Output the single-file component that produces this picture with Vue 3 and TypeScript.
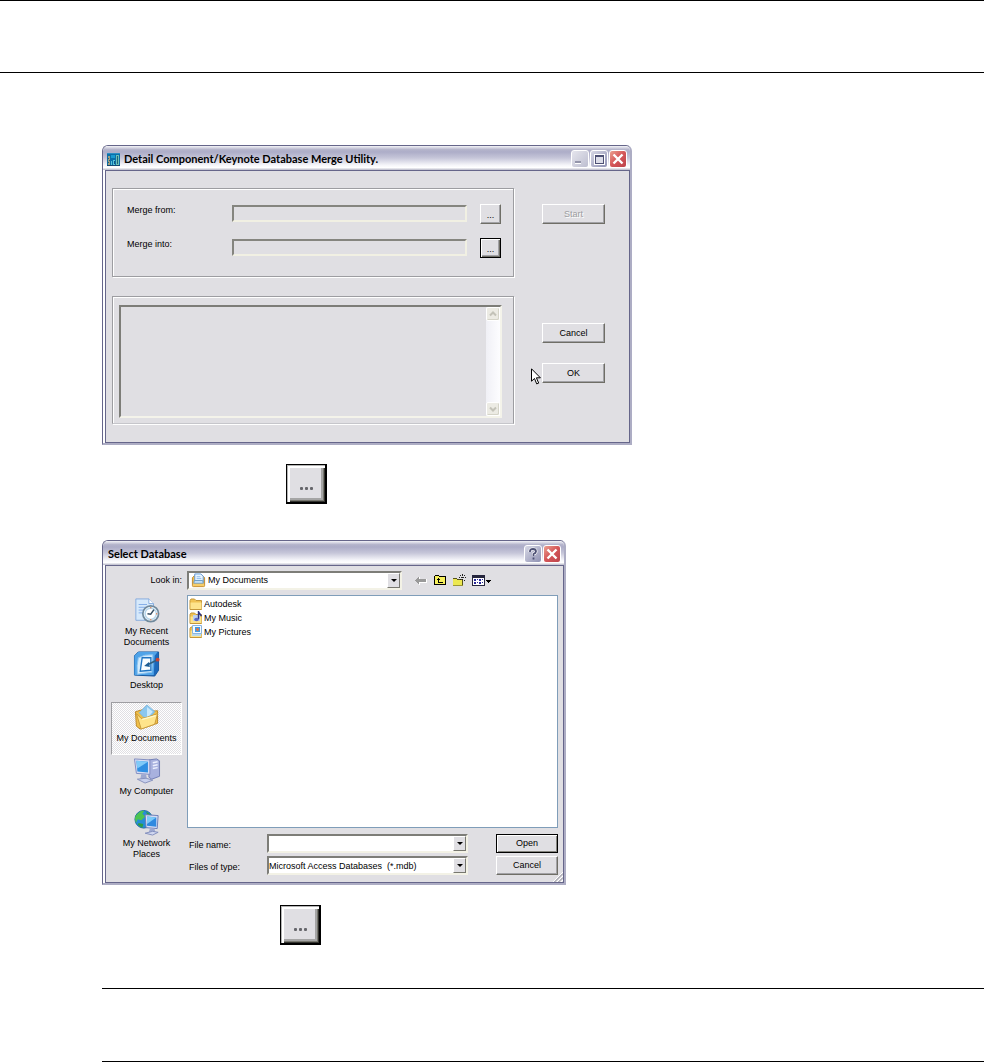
<script setup lang="ts">
import { ref } from 'vue'

const mergeFrom = ref('')
const mergeInto = ref('')
const log = ref('')
const folder = ref('My Documents')
const fileName = ref('')
const fileType = ref('mdb')

type PlaceId = 'recent' | 'desktop' | 'documents' | 'computer' | 'network'
const places: { id: PlaceId; lines: string[] }[] = [
  { id: 'recent', lines: ['My Recent', 'Documents'] },
  { id: 'desktop', lines: ['Desktop'] },
  { id: 'documents', lines: ['My Documents'] },
  { id: 'computer', lines: ['My Computer'] },
  { id: 'network', lines: ['My Network', 'Places'] },
]
const activePlace = ref<PlaceId>('documents')

const entries = [
  { name: 'Autodesk', kind: 'plain' },
  { name: 'My Music', kind: 'music' },
  { name: 'My Pictures', kind: 'pictures' },
]
</script>

<template>
  <div class="page">
    <header class="page-head"></header>

    <main class="content">
      <section class="window merge" aria-label="Merge utility">
        <div class="titlebar">
          <svg class="app-icon" viewBox="0 0 13 13" shape-rendering="crispEdges" aria-hidden="true">
            <rect width="13" height="13" fill="#0b6fa8" />
            <path d="M0 0h13v1H0z" fill="#2b8fc4" />
            <path d="M4 2h4v3H4z" fill="#1b9ad0" />
            <path d="M1 3h2v9H1z" fill="#a39c7c" />
            <path d="M9 2h3v10H9z" fill="#6fc0b4" />
            <path d="M1 5h1v1H1zM2 7h1v1H2zM1 9h1v1H1zM10 3h1v8h-1z" fill="#21647c" />
            <path d="M4 8h1v4H4zM6 7h2v5H6z" fill="#58c4d8" />
            <path d="M7 8h1v3H7z" fill="#12557e" />
            <path d="M0 12h13v1H0z" fill="#134870" />
          </svg>
          <h2>Detail Component/Keynote Database Merge Utility.</h2>
          <div class="caption-buttons">
            <button type="button" class="cap dim" aria-label="Minimize">
              <svg viewBox="0 0 16 16" shape-rendering="crispEdges"><path d="M3 10h6v3H3z" fill="#fff" /><path d="M3 10h6v2H3z" fill="#9495aa" /></svg>
            </button>
            <button type="button" class="cap" aria-label="Maximize">
              <svg viewBox="0 0 16 16" shape-rendering="crispEdges"><path d="M3 3h11v11H3z" fill="#fff" /><path d="M4 4h9v9H4z" fill="#4d5074" /><path d="M5 6h7v6H5z" fill="#dcdde8" /></svg>
            </button>
            <button type="button" class="cap close" aria-label="Close">
              <svg viewBox="0 0 16 16"><path d="M3.500 3.500l9 9M12.500 3.500l-9 9" stroke="#fff" stroke-width="2.400" /></svg>
            </button>
          </div>
        </div>

        <form class="body merge-body" @submit.prevent>
          <fieldset class="group paths">
            <label for="merge-from">Merge from:</label>
            <input id="merge-from" v-model="mergeFrom" type="text" readonly />
            <button type="button" class="btn browse" aria-label="Browse merge from">...</button>
            <label for="merge-into">Merge into:</label>
            <input id="merge-into" v-model="mergeInto" type="text" readonly />
            <button type="button" class="btn browse focused" aria-label="Browse merge into">...</button>
          </fieldset>
          <div class="actions start-actions">
            <button type="button" class="btn" disabled>Start</button>
          </div>

          <fieldset class="group log-group">
            <div class="log">
              <textarea v-model="log" readonly aria-label="Merge log"></textarea>
              <div class="scrollbar">
                <button type="button" aria-label="Scroll up"><svg viewBox="0 0 12 12"><path d="M3 7.500l3-3 3 3" /></svg></button>
                <button type="button" aria-label="Scroll down"><svg viewBox="0 0 12 12"><path d="M3 4.500l3 3 3-3" /></svg></button>
              </div>
            </div>
          </fieldset>
          <div class="actions end-actions">
            <button type="button" class="btn">Cancel</button>
            <button type="submit" class="btn">OK</button>
          </div>
        </form>
        <svg class="pointer" viewBox="0 0 10 17" aria-hidden="true">
          <path d="M.5 .8v12.400l3-2.700 2.200 5.400 2-.8-2.300-5.300h4z" fill="#fff" stroke="#000" />
        </svg>
      </section>

      <p class="step step-one">
        <button type="button" class="browse-large" aria-label="Browse"><i></i><i></i><i></i></button>
      </p>

      <section class="window select-db" aria-label="Select database">
        <div class="titlebar">
          <h2>Select Database</h2>
          <div class="caption-buttons">
            <button type="button" class="cap" aria-label="Help">
              <svg viewBox="0 0 16 16"><path d="M5 6V5q0-2 3-2t3 2.500Q11 7 8.500 8v2" fill="none" stroke="#fff" stroke-width="3" /><path d="M5 6V5q0-2 3-2t3 2.500Q11 7 8.500 8v2M8.500 11.500v2" fill="none" stroke="#4d5074" stroke-width="1.800" /></svg>
            </button>
            <button type="button" class="cap close" aria-label="Close">
              <svg viewBox="0 0 16 16"><path d="M3.500 3.500l9 9M12.500 3.500l-9 9" stroke="#fff" stroke-width="2.400" /></svg>
            </button>
          </div>
        </div>

        <form class="body select-body" @submit.prevent>
          <label class="look-label" for="look-in">Look in:</label>
          <div class="look-row">
            <div class="combo look-combo">
              <svg class="combo-icon" viewBox="0 0 16 16" aria-hidden="true">
                <path d="M1.500 5l2-2h9l2 2v8.500q0 1-1 1h-11q-1 0-1-1z" fill="#f1bd4f" stroke="#c08a2c" />
                <path d="M4 1h6.500L13 3.500V10H4z" fill="#e9f5ff" stroke="#5d96d5" />
                <path d="M6 4h4M6 6h5" stroke="#8ab9e8" />
                <path d="M3.500 8h9l.5 3H3z" fill="#c4e0f6" stroke="#699bc4" />
                <path d="M2 11.500h12V14H2z" fill="#f6cd68" />
              </svg>
              <select id="look-in" v-model="folder"><option>My Documents</option></select>
              <span class="arrow" aria-hidden="true"></span>
            </div>
            <div class="tools">
              <button type="button" aria-label="Back">
                <svg viewBox="0 0 14 14" shape-rendering="crispEdges"><path d="M5 4h1v2h7v4H6v2H5v-1H4v-1H3V9H2V8h1V7h1V6h1z" fill="#fff" /><path d="M4 4h1v2h7v3H5v2H4v-1H3V9H2V8H1V7h1V6h1V5h1z" fill="#999" /></svg>
              </button>
              <button type="button" aria-label="Up one level">
                <svg viewBox="0 0 14 14" shape-rendering="crispEdges"><path d="M1 3h1V2h4v1h7v9H1z" fill="#000" /><path d="M2 3h4v1h6v7H2z" fill="#f6f05c" /><path d="M5 5h1v1h1v1H6v2h4v1H5V7H4V6h1z" fill="#000" /></svg>
              </button>
              <button type="button" aria-label="New folder">
                <svg viewBox="0 0 14 14" shape-rendering="crispEdges"><path d="M1 5h4v1h6v7H1z" fill="#ece852" /><path d="M1 5h4v1H1zM5 6h5v1H5zM10 7h1v6h-1z" fill="#55521b" /><path d="M1 12h10v1H1z" fill="#9a9636" /><path d="M10 1h1v2h-1zM8 2h1v1H8zM12 2h1v1h-1zM9 4h3v1H9zM7 4h1v1H7zM13 4h1v1h-1zM8 6h1v1H8zM10 6h1v1h-1zM12 7h1v1h-1z" fill="#222" /></svg>
              </button>
              <button type="button" class="views" aria-label="Views">
                <svg viewBox="0 0 20 14" shape-rendering="crispEdges"><path d="M1 2h13v11H1z" fill="#26263e" /><path d="M2 5h11v7H2z" fill="#fff" /><path d="M3 6h2v2H3zM6 6h1v1H6zM8 6h2v2H8zM11 6h1v1h-1zM3 9h2v2H3zM6 9h1v1H6zM8 9h2v2H8zM11 9h1v1h-1z" fill="#28289a" /><path d="M15 7h5v1h-1v1h-1v1h-1V9h-1V8h-1z" fill="#000" /></svg>
              </button>
            </div>
          </div>

          <nav class="places" aria-label="Places">
            <button
              v-for="p in places"
              :key="p.id"
              type="button"
              class="place"
              :class="{ active: p.id === activePlace }"
              @click="activePlace = p.id"
            >
              <svg v-if="p.id === 'recent'" viewBox="0 0 28 28" aria-hidden="true">
                <path d="M2 1h14l5 5v18H2z" fill="#d6e9fb" stroke="#83aadd" />
                <path d="M16 1v5h5" fill="#fff" stroke="#83aadd" />
                <path d="M5 7h9M5 10h8M5 13h6M5 16h5" stroke="#7faae6" />
                <circle cx="18" cy="17" r="8.500" fill="#eaf3fa" stroke="#70899c" stroke-width="1.800" />
                <circle cx="18" cy="17" r="6" fill="#fff" stroke="#b7d6eb" stroke-width="1.500" />
                <path d="M21.500 12.500L18 17.500l-3.500-.5" fill="none" stroke="#344b60" stroke-width="1.600" />
                <path d="M24 17h1M18 23v1M18 10v1" stroke="#df7238" stroke-width="1.500" />
              </svg>
              <svg v-else-if="p.id === 'desktop'" viewBox="0 0 28 28" aria-hidden="true">
                <path d="M1 5l4-4h21v19l-4 6-21-1z" fill="#1c68ba" stroke="#12569e" />
                <path d="M1 5l4-4h20l-3 4-1 20H1z" fill="#4fa3e8" />
                <path d="M5 7q7-4 15-3l-1 18-15 2q-1-9 1-17z" fill="#d3ebfc" stroke="#8cc4ef" />
                <path d="M9 7h9v13l-11 1z" fill="#f8fdff" stroke="#1f74c2" stroke-width="1.400" />
                <path d="M25 9l-10 5" stroke="#2f5f80" stroke-width="1.800" />
                <path d="M11 15.500l5-4 1 5z" fill="#1a5c94" />
                <circle cx="25" cy="9" r="2" fill="#c74332" />
              </svg>
              <svg v-else-if="p.id === 'documents'" viewBox="0 0 28 28" aria-hidden="true">
                <path d="M2 8l7-2 3 2 13-1v13L7 26l-4-3z" fill="#f0bf48" stroke="#bd8827" />
                <path d="M14 1l8 7-8 9-8-8z" fill="#8bc7ef" stroke="#7fb8de" />
                <path d="M14 3l6 5-6 7z" fill="#c9e8fb" />
                <path d="M3 10l5 5 5-1 12-4-3 11-14 5z" fill="#ffe48b" stroke="#c99a38" />
                <path d="M9 16l14-4" stroke="#fff8cb" stroke-width="1.500" />
              </svg>
              <svg v-else-if="p.id === 'computer'" viewBox="0 0 28 28" aria-hidden="true">
                <path d="M16 3l8-1 3 2v16l-8 3-3-2z" fill="#a8b1de" stroke="#717eb6" />
                <path d="M20 6l5-1M20 9l5-1M20 12l5-1" stroke="#edf0ff" stroke-width="1.500" />
                <path d="M1 2l16 1v15L3 17z" fill="#d6dcf3" stroke="#7f8bc1" />
                <path d="M3 4l12 1v11L4 15z" fill="#2f8fe2" />
                <path d="M3 4l12 1L4 12z" fill="#7fcaf8" />
                <path d="M8 18h5l1 5H7z" fill="#9da8d0" />
                <path d="M4 23l9-1 7 2-8 3z" fill="#c8d0ed" stroke="#8792bc" />
              </svg>
              <svg v-else viewBox="0 0 28 28" aria-hidden="true">
                <circle cx="10.500" cy="10" r="9.500" fill="#268dd6" stroke="#1a6a9e" />
                <path d="M2 6q5-6 9-5l-2 3 3 3-4 4-4-1-2 4-1-5z" fill="#4dc451" />
                <path d="M13 2q6 2 6 8l-4-3zM5 14l5 1-1 4q-3-1-5-3z" fill="#2f9e43" />
                <path d="M12 5l14 1-1 14-12-1z" fill="#d5dcf3" stroke="#6979b3" />
                <path d="M14 7l10 1v10l-10-1z" fill="#2f89e0" />
                <path d="M14 7l10 1-10 7z" fill="#7ccaf8" />
                <path d="M17 20h5l1 4h-7z" fill="#9da8d0" />
                <path d="M12 25l8-2 6 1-6 3z" fill="#cfd6ef" stroke="#7f8bbb" />
              </svg>
              <span v-for="line in p.lines" :key="line">{{ line }}</span>
            </button>
          </nav>

          <ul class="files">
            <li v-for="e in entries" :key="e.name">
              <svg viewBox="0 0 14 14" aria-hidden="true">
                <path d="M1 3.500l1-1.500h3.500L7 3.500h5.500v9H1z" fill="#f0c253" stroke="#c4973a" />
                <path d="M1.500 5.500h11V12h-11z" fill="#fde38c" />
                <template v-if="e.kind === 'music'">
                  <path d="M4 4h7v6H4z" fill="#bed0ee" />
                  <path d="M9.500 0v8M9.500 1l3 4" fill="none" stroke="#2c3283" stroke-width="1.400" />
                  <ellipse cx="7.500" cy="8.500" rx="2.300" ry="1.800" fill="#5a68c4" />
                </template>
                <template v-if="e.kind === 'pictures'">
                  <path d="M3.500 .5h9v8h-9z" fill="#f4fbff" stroke="#8ab4de" />
                  <path d="M6 2h5v5H6z" fill="#3f9be6" />
                  <circle cx="8.500" cy="4.500" r="1.400" fill="#e47542" />
                  <path d="M3 9h9v2H3z" fill="#b7d8ed" />
                </template>
              </svg>
              <span>{{ e.name }}</span>
            </li>
          </ul>

          <div class="file-fields">
            <label for="file-name">File name:</label>
            <div class="combo">
              <input id="file-name" v-model="fileName" type="text" />
              <span class="arrow" aria-hidden="true"></span>
            </div>
            <button type="submit" class="btn default">Open</button>
            <label for="file-type">Files of type:</label>
            <div class="combo">
              <select id="file-type" v-model="fileType">
                <option value="mdb">Microsoft Access Databases&nbsp; (*.mdb)</option>
              </select>
              <span class="arrow" aria-hidden="true"></span>
            </div>
            <button type="button" class="btn">Cancel</button>
          </div>
        </form>
        <svg class="grip" viewBox="0 0 10 10" aria-hidden="true">
          <path d="M0 10L10 0M4 10l6-6M8 10l2-2" stroke="#fff" />
          <path d="M1.500 10L10 1.500M5.500 10L10 5.500" stroke="#8d8d98" />
        </svg>
      </section>

      <p class="step step-two">
        <button type="button" class="browse-large" aria-label="Browse"><i></i><i></i><i></i></button>
      </p>

      <aside class="note"></aside>
    </main>
  </div>
</template>

<style>
body {
  margin: 0;
  background: #fff;
}
</style>

<style scoped>
.page,
.page * {
  box-sizing: border-box;
}
.page {
  font: 9px/11px "Liberation Sans", Arial, sans-serif;
  color: #000;
}
.page-head {
  height: 73px;
  border-top: 1px solid #000;
  border-bottom: 1px solid #000;
}
.content {
  padding: 72px 0 0 102px;
}
button,
input,
select,
textarea {
  font: inherit;
  color: inherit;
  margin: 0;
  padding: 0;
  border: 0;
  border-radius: 0;
  background: none;
  outline: none;
  appearance: none;
}
svg {
  display: block;
}

/* Window chrome */
.window {
  position: relative;
  display: flex;
  flex-direction: column;
  max-width: 100%;
  border: solid #66668a;
  border-width: 1px 2px 2px 1px;
  border-right-color: #adadc4;
  border-bottom-color: #adadc4;
  border-radius: 6px 6px 0 0;
  background: #fff;
}
.merge {
  width: 530px;
  min-height: 300px;
}
.select-db {
  width: 464px;
  min-height: 345px;
}
.titlebar {
  display: flex;
  align-items: center;
  height: 24px;
  padding: 2px 3px 0 4px;
  border-radius: 5px 5px 0 0;
  background: linear-gradient(#f4f4f8 0, #b4b4cb 15%, #adadc8 25%, #c6c6d9 50%, #f6f6fa 80%, #fff 90%, #b8b8c8 100%);
}
.titlebar h2 {
  flex: 1;
  margin: 0;
  padding-left: 1px;
  font: bold 11px/14px Lato, sans-serif;
  white-space: nowrap;
}
.app-icon {
  width: 13px;
  height: 13px;
  margin-right: 3px;
}
.caption-buttons {
  display: flex;
  gap: 1px;
}
.cap {
  width: 18px;
  height: 18px;
  border: 1px solid #fff;
  border-radius: 3px;
  background: linear-gradient(135deg, #d7d8e5, #8f91b3);
}
.cap svg {
  width: 16px;
  height: 16px;
}
.cap.dim {
  background: linear-gradient(135deg, #e5e5ed, #bdbed0);
}
.cap.close {
  background: linear-gradient(135deg, #eca08f, #d45558 50%, #bd444c);
}
.body {
  flex: 1;
  margin-left: 2px;
  border: 1px solid #66668a;
  background: #e0dfe3;
}

/* Merge utility */
.merge-body {
  display: grid;
  grid-template-columns: minmax(0, 402px) 63px;
  grid-template-rows: 89px 128px;
  gap: 19px 28px;
  padding: 17px 0 0 6px;
}
.group {
  min-width: 0;
  margin: 0;
  padding: 0;
  border: 1px solid #9d9da1;
  box-shadow: inset 1px 1px #fff, 1px 1px #fff;
}
.group.log-group {
  padding: 8px 11px 5px 6px;
  border-bottom-color: #c6c6cb;
}
.group.paths {
  display: grid;
  grid-template-columns: 92px minmax(0, 235px) 21px;
  grid-template-rows: 20px 20px;
  column-gap: 13px;
  row-gap: 14px;
  align-items: start;
  padding: 15px 0 0 14px;
}
.paths input {
  width: 100%;
  height: 17px;
  margin-top: 1px;
  border: solid #f1f0e3;
  border-width: 2px;
  border-top-color: #85857f;
  border-left-color: #85857f;
}
.paths label {
  padding-top: 1px;
}
.btn {
  display: flex;
  align-items: center;
  justify-content: center;
  height: 20px;
  background: #e0dfe3;
  border: 1px solid #fff;
  border-right-color: #6f6e66;
  border-bottom-color: #6f6e66;
  box-shadow: inset -1px -1px #a2a2a6;
}
.btn:disabled {
  color: #9d9da1;
  text-shadow: 1px 1px #fff;
}
.btn.browse {
  padding-top: 2px;
}
.btn.focused {
  border-color: #000;
  box-shadow: inset 1px 1px #fff, inset -1px -1px #6f6e66, inset -2px -2px #a2a2a6;
}
.btn.default {
  border-color: #000;
  box-shadow: inset 1px 1px #fff, inset -1px -1px #85857f;
}
.actions {
  display: flex;
  flex-direction: column;
  gap: 20px;
}
.start-actions {
  padding-top: 16px;
}
.end-actions {
  padding-top: 27px;
}
.log {
  display: flex;
  height: 113px;
  border: 2px solid #f4f3ea;
  border-top-color: #7d7d78;
  border-left-color: #7d7d78;
}
.log textarea {
  flex: 1;
  min-width: 0;
  resize: none;
}
.scrollbar {
  display: flex;
  flex-direction: column;
  justify-content: space-between;
  width: 14px;
  background: linear-gradient(90deg, #f0f0f6, #fdfdff);
}
.scrollbar button {
  width: 14px;
  height: 14px;
  border: 1px solid #fff;
  border-radius: 2px;
  background: #ecebe4;
  box-shadow: inset -1px -1px #d5d4c8;
}
.scrollbar svg {
  width: 12px;
  height: 12px;
  fill: none;
  stroke: #c3c2b8;
  stroke-width: 2;
}
.pointer {
  position: absolute;
  left: 428px;
  top: 222px;
  width: 10px;
  height: 17px;
}

/* Inline step buttons */
.step {
  display: flex;
  margin: 0;
}
.step-one {
  padding: 19px 0 36px 184px;
}
.step-two {
  padding: 20px 0 43px 178px;
}
.browse-large {
  display: flex;
  justify-content: center;
  gap: 2px;
  width: 41px;
  height: 40px;
  padding-top: 22px;
  border: 1px solid #000;
  border-right-width: 2px;
  border-bottom-width: 2px;
  background: #e0dfe3;
  box-shadow: inset 1px 1px #b4b4b4, inset 3px 3px #fff, inset -1px -1px #33332f, inset -2px -2px #77776f, inset -4px -4px #a5a5a5;
}
.browse-large i {
  width: 3px;
  height: 3px;
  border-radius: 1px;
  background: #66666b;
}

/* Select database */
.select-body {
  display: grid;
  grid-template-columns: 71px minmax(0, 371px);
  grid-template-rows: 24px 239px auto;
  column-gap: 5px;
  padding: 5px 0 0 5px;
}
.look-label {
  padding-top: 4px;
  text-align: right;
}
.look-row {
  display: flex;
  gap: 12px;
}
.combo {
  display: flex;
  align-items: center;
  min-width: 0;
  height: 19px;
  border: 2px solid #f3f2e6;
  border-top-color: #7d7d78;
  border-left-color: #7d7d78;
  background: #fff;
}
.combo select,
.combo input {
  flex: 1;
  min-width: 0;
  height: 15px;
}
.look-combo {
  flex: 0 1 215px;
}
.combo-icon {
  width: 15px;
  height: 15px;
  margin: 0 2px;
}
.arrow {
  display: flex;
  align-items: center;
  justify-content: center;
  width: 13px;
  height: 15px;
  border: 1px solid #fff;
  border-right-color: #77776f;
  border-bottom-color: #77776f;
  background: #e0dfe3;
}
.arrow::before {
  content: "";
  border: 3px solid transparent;
  border-top-color: #000;
  border-bottom-width: 0;
}
.tools {
  display: flex;
  align-items: flex-start;
  gap: 5px;
  padding-top: 2px;
}
.tools svg {
  width: 14px;
  height: 14px;
}
.tools .views svg {
  width: 20px;
}
.places {
  grid-row: 2 / 4;
  display: flex;
  flex-direction: column;
  padding-top: 1px;
}
.place {
  display: flex;
  flex-direction: column;
  align-items: center;
  height: 53px;
  padding-top: 1px;
  border: 1px solid transparent;
  white-space: nowrap;
}
.place svg {
  width: 28px;
  height: 27px;
  margin-bottom: 2px;
}
.place.active {
  border-color: #9d9da1 #fff #fff #9d9da1;
  background: repeating-conic-gradient(#e0dfe3 0 25%, #fff 0 50%) 0 0 / 2px 2px;
}
.files {
  height: 233px;
  margin: 0;
  padding: 1px;
  border: 1px solid #7f9db9;
  background: #fff;
  list-style: none;
}
.files li {
  display: flex;
  align-items: center;
  gap: 1px;
  height: 14px;
}
.files svg {
  width: 14px;
  height: 14px;
}
.file-fields {
  display: grid;
  grid-template-columns: 78px minmax(0, 201px) minmax(62px, 1fr);
  grid-template-rows: 19px 19px;
  row-gap: 3px;
  align-items: center;
  padding-left: 2px;
}
.file-fields label {
  padding-top: 3px;
}
.file-fields .btn {
  width: 62px;
  height: 19px;
  justify-self: end;
}
.file-fields select {
  padding: 2px 0 0;
}
.grip {
  position: absolute;
  right: 1px;
  bottom: 1px;
  width: 10px;
  height: 10px;
}

.note {
  height: 74px;
  border-top: 1px solid #000;
  border-bottom: 1px solid #000;
}
</style>
